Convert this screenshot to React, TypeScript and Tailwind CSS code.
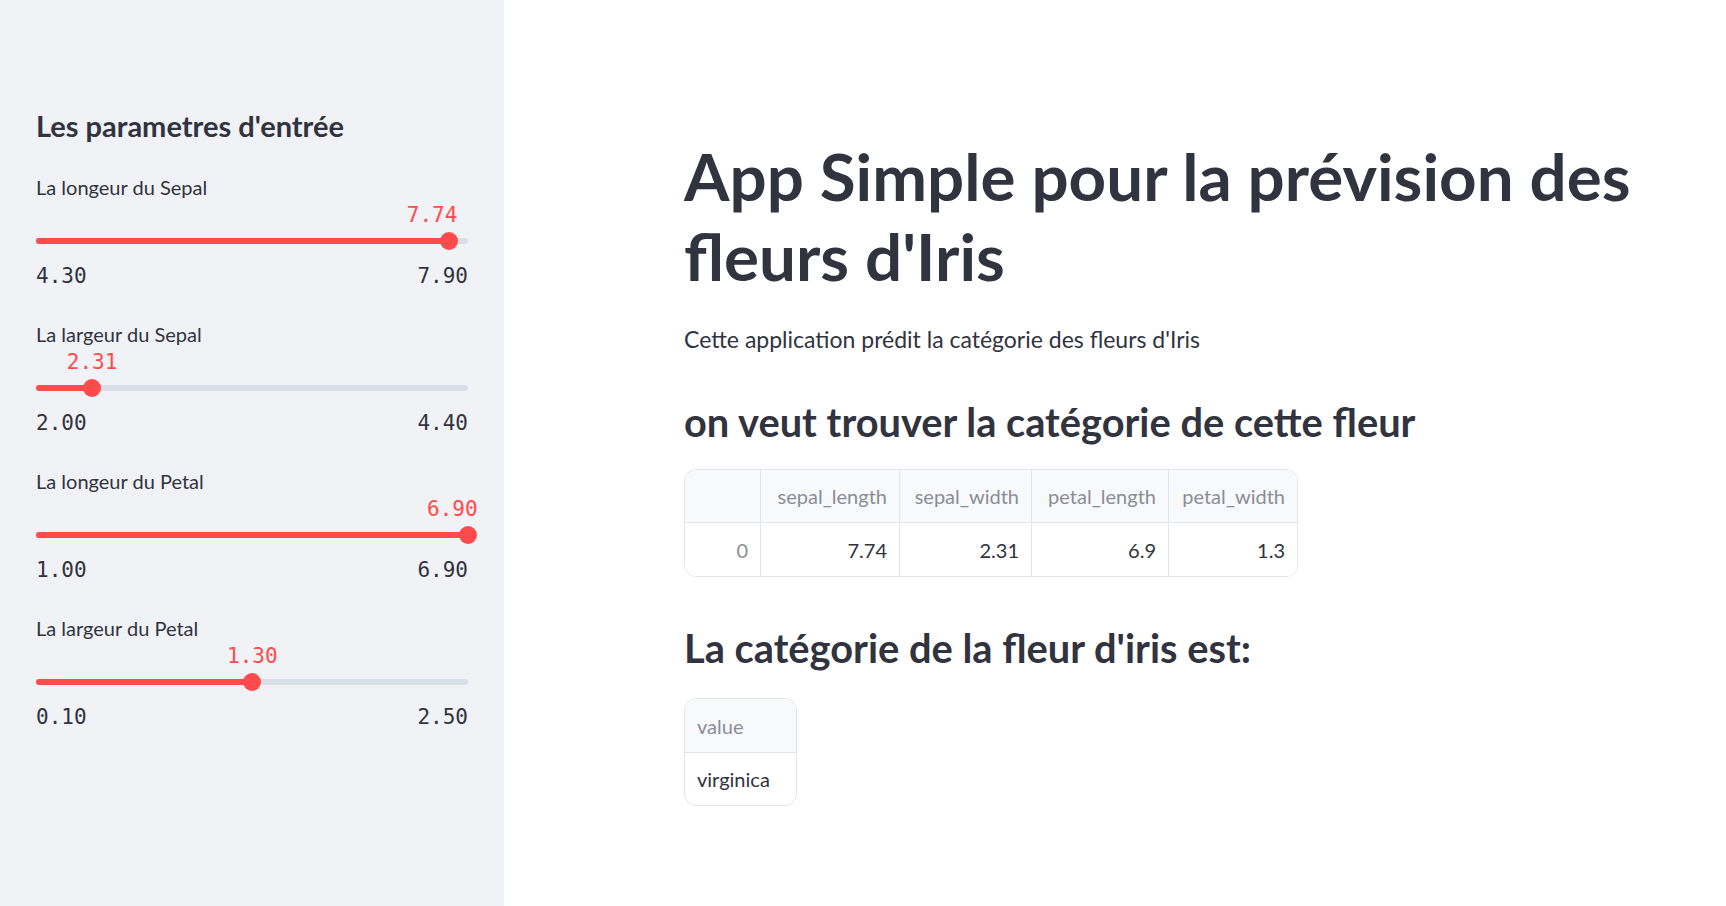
import React from 'react'

interface SliderProps {
  label: string
  min: number
  max: number
  value: number
  labelShift: number
}

const sliders: SliderProps[] = [
  { label: 'La longeur du Sepal', min: 4.3, max: 7.9, value: 7.74, labelShift: -42 },
  { label: 'La largeur du Sepal', min: 2.0, max: 4.4, value: 2.31, labelShift: -25 },
  { label: 'La longeur du Petal', min: 1.0, max: 6.9, value: 6.9, labelShift: -41 },
  { label: 'La largeur du Petal', min: 0.1, max: 2.5, value: 1.3, labelShift: -25 },
]

const sans = "font-['Lato','Liberation_Sans',sans-serif]"
const mono = "font-['DejaVu_Sans_Mono','Liberation_Mono',monospace]"

function Slider({ label, min, max, value, labelShift }: SliderProps) {
  const pct = ((value - min) / (max - min)) * 100
  return (
    <div className="mb-[30px]">
      <div className="h-[28px] text-[20px] leading-[28px] text-[#31333f]">{label}</div>
      <div className="relative h-[61px]">
        <div
          className={`${mono} absolute top-0 text-[21px] leading-[28px] text-[#ff4b4b]`}
          style={{ left: `calc(${pct}% + ${labelShift}px)` }}
        >
          {value.toFixed(2)}
        </div>
        <div className="absolute left-0 right-0 top-[37px] h-[6px] rounded-full bg-[#dadee7]">
          <div className="h-full rounded-full bg-[#ff4b4b]" style={{ width: `${pct}%` }} />
        </div>
        <div
          className="absolute top-[31px] h-[18px] w-[18px] -ml-[9px] rounded-full bg-[#ff4b4b]"
          style={{ left: `${pct}%` }}
        />
      </div>
      <div className={`${mono} flex h-[28px] justify-between text-[21px] leading-[28px] text-[#31333f]`}>
        <span>{min.toFixed(2)}</span>
        <span>{max.toFixed(2)}</span>
      </div>
    </div>
  )
}

const cols = ['sepal_length', 'sepal_width', 'petal_length', 'petal_width']
const row = ['7.74', '2.31', '6.9', '1.3']

export default function App() {
  return (
    <div className={`${sans} flex min-h-[906px] w-full bg-white text-[#31333f]`}>
      <aside className="w-[504px] shrink-0 bg-[#f0f2f6] px-[36px] pt-[108px]">
        <h2 className="mb-[29px] h-[36px] text-[29px] font-bold leading-[36px] text-[#31333f]">
          Les parametres d'entrée
        </h2>
        {sliders.map(s => (
          <Slider key={s.label} {...s} />
        ))}
      </aside>

      <main className="flex-1 pl-[180px] pt-[136px]">
        <h1 className="text-[65.5px] font-bold leading-[80px] text-[#31333f]">
          App Simple pour la prévision des
          <br />
          fleurs d'Iris
        </h1>

        <p className="mt-[27px] text-[23px] leading-[32px]">
          Cette application prédit la catégorie des fleurs d'Iris
        </p>

        <h3 className="mt-[43px] text-[39.8px] font-bold leading-[48px]">
          on veut trouver la catégorie de cette fleur
        </h3>

        <div className="mt-[23px] w-[614px] overflow-hidden rounded-[12px] border border-[#e4e5e9] text-[20px]">
          <div className="grid grid-cols-[76px_139px_132px_137px_128px] bg-[#f8f9fb] text-[#8b8d96]">
            <div className="h-[53px] border-b border-r border-[#e4e5e9]" />
            {cols.map((c, i) => (
              <div
                key={c}
                className={`flex h-[53px] items-center justify-end border-b border-[#e4e5e9] pr-[12px] ${i < 3 ? 'border-r' : ''}`}
              >
                {c}
              </div>
            ))}
          </div>
          <div className="grid grid-cols-[76px_139px_132px_137px_128px] bg-white">
            <div className="flex h-[53px] items-center justify-end border-r border-[#e4e5e9] pr-[12px] text-[#8b8d96]">
              0
            </div>
            {row.map((v, i) => (
              <div
                key={i}
                className={`flex h-[53px] items-center justify-end border-[#e4e5e9] pr-[12px] text-[#31333f] ${i < 3 ? 'border-r' : ''}`}
              >
                {v}
              </div>
            ))}
          </div>
        </div>

        <h3 className="mt-[47px] text-[39.8px] font-bold leading-[48px]">
          La catégorie de la fleur d'iris est:
        </h3>

        <div className="mt-[26px] w-[113px] overflow-hidden rounded-[12px] border border-[#e4e5e9] text-[20px]">
          <div className="flex h-[54px] items-center border-b border-[#e4e5e9] bg-[#f8f9fb] pl-[12px] text-[#8b8d96]">
            value
          </div>
          <div className="flex h-[52px] items-center pl-[12px] text-[#31333f]">virginica</div>
        </div>
      </main>
    </div>
  )
}
